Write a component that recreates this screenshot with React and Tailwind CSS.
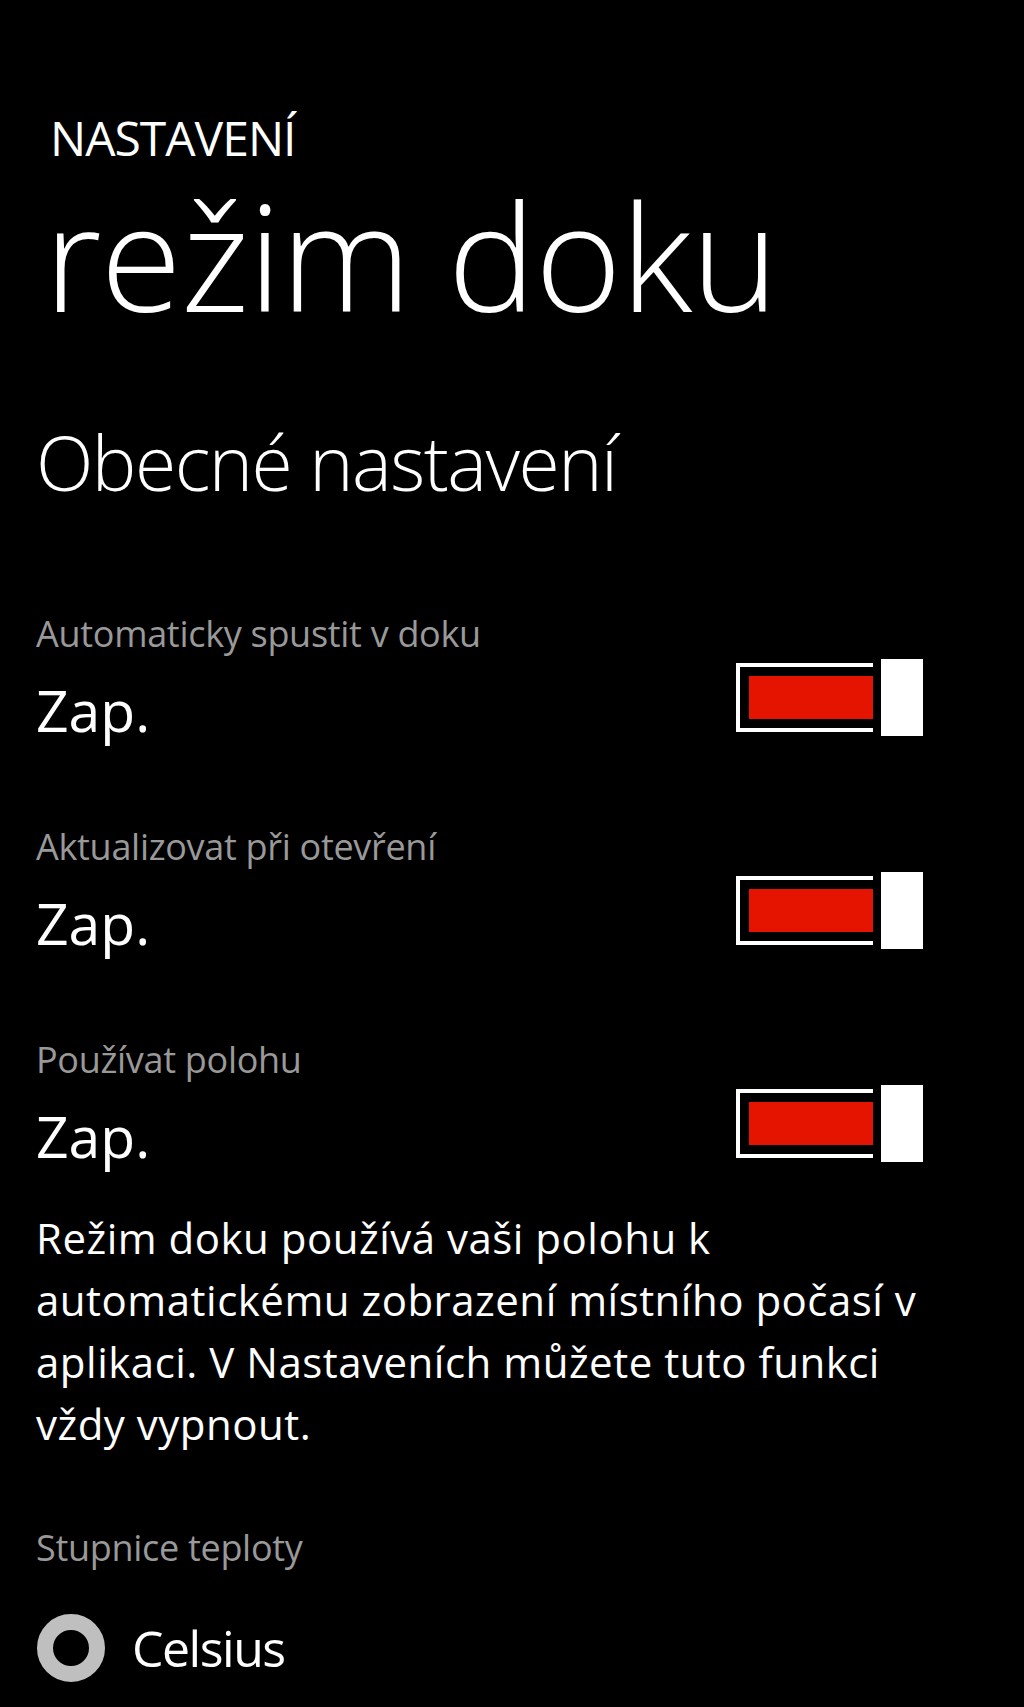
import React from "react";

const FONT = { fontFamily: '"Open Sans", "Noto Sans", sans-serif' };

// Windows Phone style toggle, shown in the "on" state
const ToggleSwitch = () => (
    <div className="flex items-center mt-[43px] shrink-0">
        <div className="w-[137px] h-[69px] border-4 border-r-0 border-white pt-[9px] pb-[9px] pl-[9px]">
            <div className="h-full w-full bg-[#e51400]" />
        </div>
        <div className="ml-[8px] w-[42px] h-[77px] bg-white" />
    </div>
);

const ToggleRow = ({ label, value, className = "" }) => (
    <div className={`flex items-start justify-between pr-[101px] ${className}`}>
        <div className="flex flex-col">
            <span className="text-[36px] leading-none tracking-[-0.3px] text-[#999999]">{label}</span>
            <span className="mt-[30px] text-[57px] leading-none text-white">{value}</span>
        </div>
        <ToggleSwitch />
    </div>
);

export default function App() {
    return (
        <div className="min-h-[1707px] w-[1024px] bg-black text-white overflow-hidden pl-[36px]" style={FONT}>
            {/* Header */}
            <div className="pt-[114px] pl-[14px] text-[48px] leading-none tracking-[-1px]">NASTAVENÍ</div>
            <h1 className="mt-[19px] pl-[8px] text-[148px] leading-none font-light tracking-[-1px]">režim doku</h1>

            {/* Section title */}
            <h2 className="mt-[96px] text-[75px] leading-none font-light tracking-[-1.5px]">Obecné nastavení</h2>

            {/* Toggles */}
            <ToggleRow className="mt-[116px]" label="Automaticky spustit v doku" value="Zap." />
            <ToggleRow className="mt-[90px]" label="Aktualizovat při otevření" value="Zap." />
            <ToggleRow className="mt-[90px]" label="Používat polohu" value="Zap." />

            {/* Location note */}
            <p className="mt-[42px] text-[42px] leading-[62px] tracking-[0.5px] whitespace-nowrap">
                Režim doku používá vaši polohu k<br />
                automatickému zobrazení místního počasí v<br />
                aplikaci. V Nastaveních můžete tuto funkci<br />
                vždy vypnout.
            </p>

            {/* Temperature scale */}
            <div className="mt-[75px] text-[36px] leading-none tracking-[-0.3px] text-[#999999]">Stupnice teploty</div>
            <div className="mt-[48px] flex items-center">
                <div className="w-[68px] h-[68px] rounded-full border-[16px] border-[#bfbfbf] ml-[1px]" />
                <span className="ml-[27px] text-[50px] leading-none tracking-[-1.5px]">Celsius</span>
            </div>
        </div>
    );
}
